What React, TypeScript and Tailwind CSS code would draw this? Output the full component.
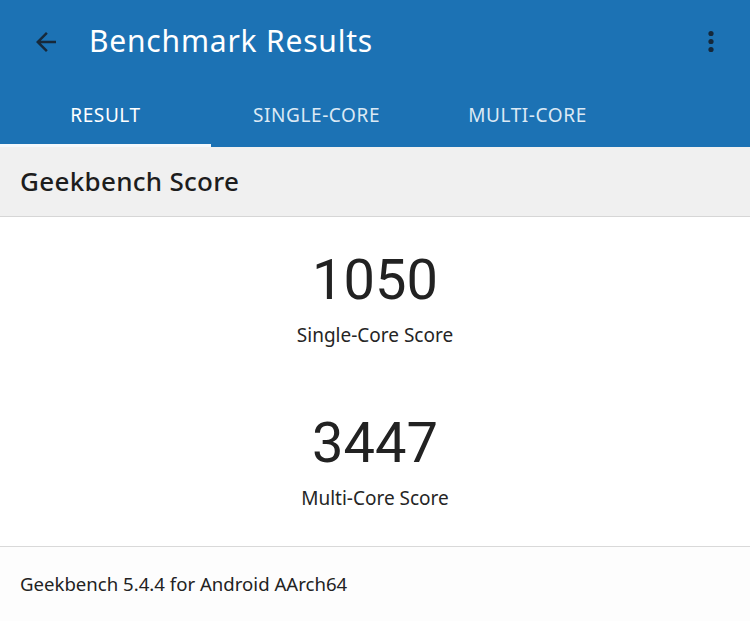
import React from 'react';

const tabs = ['RESULT', 'SINGLE-CORE', 'MULTI-CORE'];

const scores = [
  { value: '1050', label: 'Single-Core Score' },
  { value: '3447', label: 'Multi-Core Score' },
];

const ArrowBack = () => (
  <svg width="30" height="30" viewBox="0 0 24 24" aria-hidden="true">
    <path
      d="M20 11H7.83l5.59-5.59L12 4l-8 8 8 8 1.41-1.41L7.83 13H20v-2z"
      fill="#17293a"
    />
  </svg>
);

const MoreVert = () => (
  <svg width="10" height="24" viewBox="0 0 10 24" aria-hidden="true">
    <circle cx="5" cy="3.5" r="2.6" fill="#15283a" />
    <circle cx="5" cy="11.5" r="2.6" fill="#15283a" />
    <circle cx="5" cy="19.5" r="2.6" fill="#15283a" />
  </svg>
);

const sans = { fontFamily: '"Noto Sans", Roboto, sans-serif' };

export default function App() {
  return (
    <div
      className="flex h-[621px] w-[750px] flex-col overflow-hidden bg-white"
      style={sans}
    >
      <header className="shrink-0 bg-[#1c72b4]">
        <div className="flex h-[84px] items-center pl-[31px] pr-[34px]">
          <ArrowBack />
          <h1 className="ml-[28px] flex-1 pb-[2px] text-[30px] leading-none tracking-[0.8px] text-white">
            Benchmark Results
          </h1>
          <MoreVert />
        </div>
        <nav className="flex h-[63px]">
          {tabs.map((tab, i) => (
            <div
              key={tab}
              className={
                'flex w-[211px] items-center justify-center border-b-[3px] pt-[3px] text-[19px] tracking-[0.6px] ' +
                (i === 0
                  ? 'border-[#f4f8fb] text-white'
                  : 'border-transparent text-[#dbe9f5]')
              }
            >
              {tab}
            </div>
          ))}
        </nav>
      </header>

      <div className="flex h-[70px] shrink-0 items-center border-b border-[#d6d6d6] bg-[#f0f0f0] px-5">
        <h2 className="text-[26px] font-medium tracking-[0.3px] text-[#1d1d1d]">
          Geekbench Score
        </h2>
      </div>

      <div className="flex h-[329px] shrink-0 flex-col items-center gap-[64px] pt-[30px]">
        {scores.map((s) => (
          <div key={s.label} className="flex flex-col items-center">
            <div
              className="text-[56px] leading-[66px] text-[#222]"
              style={{ fontFamily: 'Roboto, sans-serif' }}
            >
              {s.value}
            </div>
            <div className="mt-[11px] text-[19px] leading-[22px] text-[#252525]">
              {s.label}
            </div>
          </div>
        ))}
      </div>

      <footer className="flex flex-1 items-center border-t border-[#d9d9d9] bg-[#fdfdfd] px-5">
        <span className="text-[18.6px] text-[#222]">
          Geekbench 5.4.4 for Android AArch64
        </span>
      </footer>
    </div>
  );
}
